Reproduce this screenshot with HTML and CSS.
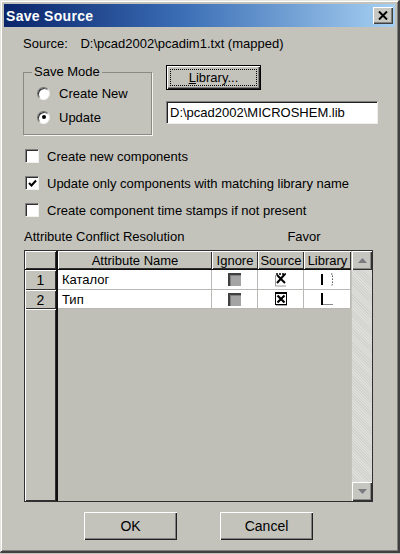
FILE: index.html
```html
<!DOCTYPE html>
<html lang="en">
<head>
    <meta charset="UTF-8">
    <title>Save Source</title>
    <link rel="stylesheet" href="styles.css">
</head>
<body>
    <div class="dialog">
        <div class="titlebar">
            <span class="title">Save Source</span>
            <button class="close-btn">
                <svg width="10" height="9" viewBox="0 0 10 9"><path d="M1 0.5 L9 8.5 M9 0.5 L1 8.5" stroke="#000" stroke-width="2"/></svg>
            </button>
        </div>

        <div class="content">
            <div class="source-line">
                <span class="source-label">Source:</span>
                <span>D:\pcad2002\pcadim1.txt (mapped)</span>
            </div>

            <div class="top-row">
                <fieldset class="group">
                    <legend>Save Mode</legend>
                    <div class="radio-row"><span class="radio"></span>Create New</div>
                    <div class="radio-row"><span class="radio checked"></span>Update</div>
                </fieldset>
                <div class="library-col">
                    <button class="btn default"><span class="focus"><u>L</u>ibrary...</span></button>
                    <div class="textbox">D:\pcad2002\MICROSHEM.lib</div>
                </div>
            </div>

            <div class="check-row"><span class="check"></span>Create new components</div>
            <div class="check-row"><span class="check checked">
                <svg width="9" height="9" viewBox="0 0 9 9"><path d="M1 4 L3.5 6.5 L8 1.5" fill="none" stroke="#000" stroke-width="2"/></svg>
            </span>Update only components with matching library name</div>
            <div class="check-row"><span class="check"></span>Create component time stamps if not present</div>

            <div class="grid-caption">
                <span>Attribute Conflict Resolution</span>
                <span class="favor">Favor</span>
            </div>

            <div class="grid">
                <div class="cell corner"></div>
                <div class="cell head">Attribute Name</div>
                <div class="cell head">Ignore</div>
                <div class="cell head">Source</div>
                <div class="cell head">Library</div>
                <div class="scrollbar">
                    <div class="sb-btn"><svg width="9" height="5" viewBox="0 0 9 5"><path d="M0 5 L4.5 0 L9 5 Z" fill="#7a7a80"/></svg></div>
                    <div class="sb-track"></div>
                    <div class="sb-btn"><svg width="9" height="5" viewBox="0 0 9 5"><path d="M0 0 L4.5 5 L9 0 Z" fill="#7a7a80"/></svg></div>
                </div>

                <div class="cell rowhead">1</div>
                <div class="cell data name">Каталог</div>
                <div class="cell data"><span class="gcheck disabled"></span></div>
                <div class="cell data">
                    <svg width="14" height="14" viewBox="0 0 14 14"><path d="M1.5 2 V13 M1.5 13 H12" stroke="#9a9a9a" stroke-width="1" fill="none"/><path d="M3 2 L11 10 M11 1 L3 10" stroke="#000" stroke-width="2"/><path d="M2 1 H12" stroke="#000" stroke-width="1.5" stroke-dasharray="2 1"/></svg>
                </div>
                <div class="cell data">
                    <svg width="14" height="14" viewBox="0 0 14 14"><path d="M2 1 V12" stroke="#000" stroke-width="2"/><path d="M11 1 H12.5 V12 H11" stroke="#555" stroke-width="1" stroke-dasharray="1.5 1.5" fill="none"/></svg>
                </div>

                <div class="cell rowhead">2</div>
                <div class="cell data name">Тип</div>
                <div class="cell data"><span class="gcheck disabled"></span></div>
                <div class="cell data">
                    <svg width="14" height="14" viewBox="0 0 14 14"><rect x="1.5" y="1.5" width="11" height="11" fill="#fff" stroke="#000" stroke-width="1"/><path d="M1 1 H13" stroke="#000" stroke-width="2"/><path d="M3.5 3.5 L10.5 10.5 M10.5 3.5 L3.5 10.5" stroke="#000" stroke-width="2.2"/><path d="M2 13.5 H13" stroke="#aaa" stroke-width="1"/></svg>
                </div>
                <div class="cell data">
                    <svg width="14" height="14" viewBox="0 0 14 14"><path d="M2 1 V13" stroke="#000" stroke-width="2"/><path d="M3 12.5 H13" stroke="#888" stroke-width="1"/></svg>
                </div>

                <div class="cell rowhead filler"></div>
                <div class="empty"></div>
            </div>

            <div class="buttons">
                <button class="btn action">OK</button>
                <button class="btn action">Cancel</button>
            </div>
        </div>
    </div>
</body>
</html>
```

FILE: styles.css
```css
* {
    box-sizing: border-box;
}
body {
    margin: 0;
    background-color: #c3c3bc;
    font-family: "Liberation Sans", Arial, sans-serif;
    font-size: 13px;
    color: #000;
}
.dialog {
    width: 400px;
    height: 553px;
    padding: 3px;
    background-color: #c3c3bc;
    border-top: 1px solid #e6e6e0;
    border-left: 1px solid #e6e6e0;
    border-right: 2px solid #404040;
    border-bottom: 2px solid #404040;
    box-shadow: inset 1px 1px #ffffff, inset -1px -1px #7e7e7a;
}
.titlebar {
    height: 23px;
    display: flex;
    align-items: center;
    justify-content: space-between;
    padding: 0 2px 0 2px;
    background: linear-gradient(to right, #0a246a 0%, #3a6db5 45%, #a6d0f2 100%);
}
.title {
    color: #fff;
    font-family: "Liberation Sans", Arial, sans-serif;
    font-weight: bold;
    font-size: 14px;
    letter-spacing: 0.3px;
}
.close-btn {
    width: 20px;
    height: 17px;
    padding: 0;
    display: flex;
    align-items: center;
    justify-content: center;
    background-color: #c8c8c2;
    border: none;
    box-shadow: inset 1px 1px #ffffff, inset -1px -1px #404040, inset -2px -2px #808080;
}
.content {
    padding: 9px 0 0 19px;
}
.source-line {
    height: 16px;
    line-height: 16px;
}
.source-label {
    margin-right: 9px;
}
.top-row {
    display: flex;
    margin-top: 13px;
}
.group {
    width: 129px;
    height: 70px;
    margin: 0;
    padding: 1px 0 0 13px;
    border: 1px solid #8a8a84;
    box-shadow: 1px 1px #f4f4f0;
}
.group legend {
    padding: 0 2px;
    margin-left: -5px;
    line-height: 14px;
}
.radio-row {
    display: flex;
    align-items: center;
    height: 22px;
    margin-top: 2px;
}
.radio {
    width: 13px;
    height: 13px;
    border-radius: 50%;
    background-color: #fff;
    margin-right: 9px;
    border: 1px solid;
    border-color: #707070 #e8e8e8 #f8f8f8 #707070;
    box-shadow: inset 1px 1px #303030;
    display: flex;
    align-items: center;
    justify-content: center;
}
.radio.checked::after {
    content: "";
    width: 4px;
    height: 4px;
    border-radius: 50%;
    background-color: #000;
}
.library-col {
    margin-left: 14px;
    display: flex;
    flex-direction: column;
}
.btn {
    font-family: "Liberation Sans", Arial, sans-serif;
    font-size: 13px;
    color: #000;
    background-color: #c3c3bc;
    border: none;
    padding: 0;
    box-shadow: inset 1px 1px #ffffff, inset -1px -1px #202020, inset -2px -2px #808080;
}
.btn.default {
    width: 95px;
    height: 25px;
    border: 1px solid #000;
    padding: 3px;
}
.focus {
    display: block;
    height: 100%;
    line-height: 15px;
    border: 1px dotted #000;
}
.textbox {
    width: 212px;
    height: 23px;
    margin-top: 11px;
    padding: 3px 0 0 3px;
    background-color: #fff;
    border-top: 1px solid #808080;
    border-left: 1px solid #808080;
    border-right: 1px solid #eeeeea;
    border-bottom: 1px solid #eeeeea;
    box-shadow: inset 1px 1px #202020;
    font-size: 13px;
    line-height: 16px;
}
.check-row {
    display: flex;
    align-items: center;
    height: 16px;
    margin-left: 2px;
    margin-top: 11px;
}
.top-row + .check-row {
    margin-top: 13px;
}
.check {
    width: 14px;
    height: 14px;
    margin-right: 8px;
    background-color: #fff;
    border-top: 1px solid #808080;
    border-left: 1px solid #808080;
    border-right: 1px solid #f0f0ec;
    border-bottom: 1px solid #f0f0ec;
    box-shadow: inset 1px 1px #303030;
    display: flex;
    align-items: center;
    justify-content: center;
}
.grid-caption {
    display: flex;
    height: 16px;
    line-height: 16px;
    margin-top: 11px;
    margin-left: 1px;
}
.favor {
    margin-left: 103px;
}
.grid {
    display: grid;
    grid-template-columns: 33px 154px 46px 46px 47px 21px;
    grid-template-rows: 19px 20px 19px 1fr;
    width: 349px;
    height: 252px;
    margin-top: 5px;
    margin-left: 1px;
    border: 1px solid #303030;
    background-color: #bfbfb8;
}
.cell {
    display: flex;
    align-items: center;
    justify-content: center;
    overflow: hidden;
}
.corner,
.head,
.rowhead {
    background-color: #c3c3bc;
    box-shadow: inset 1px 1px #ffffff, inset -1px -1px #303030;
}
.corner,
.rowhead {
    border-right: 2px solid #101010;
}
.head {
    line-height: 17px;
    border-bottom: 1px solid #101010;
}
.corner {
    border-bottom: 1px solid #101010;
}
.data {
    background-color: #fff;
    border-right: 1px solid #b8b8b4;
    border-bottom: 1px solid #b8b8b4;
}
.name {
    justify-content: flex-start;
    padding-left: 4px;
}
.rowhead {
    font-size: 14px;
}
.filler {
    grid-column: 1;
}
.empty {
    grid-column: 2 / 6;
}
.gcheck {
    width: 13px;
    height: 13px;
    background-color: #a4a4a4;
    border-top: 2px solid #404040;
    border-left: 2px solid #404040;
    box-shadow: inset 1px 1px #808080;
}
.scrollbar {
    grid-column: 6;
    grid-row: 1 / 5;
    display: flex;
    flex-direction: column;
    padding-left: 1px;
    background-color: #c3c3bc;
}
.sb-btn {
    height: 19px;
    display: flex;
    align-items: center;
    justify-content: center;
    background-color: #c6c6c0;
    box-shadow: inset 1px 1px #ffffff, inset -1px -1px #303030, inset -2px -2px #8a8a86;
}
.sb-track {
    flex: 1;
    background-color: #dededa;
    background-image: repeating-linear-gradient(45deg, #d2d2ce 0 1px, transparent 1px 2px);
}
.buttons {
    display: flex;
    gap: 43px;
    margin-top: 10px;
    margin-left: 61px;
}
.btn.action {
    width: 93px;
    height: 28px;
    font-size: 14px;
    box-shadow: inset 1px 1px #ffffff, inset -1px -1px #202020, inset -2px -2px #808080;
}
```
